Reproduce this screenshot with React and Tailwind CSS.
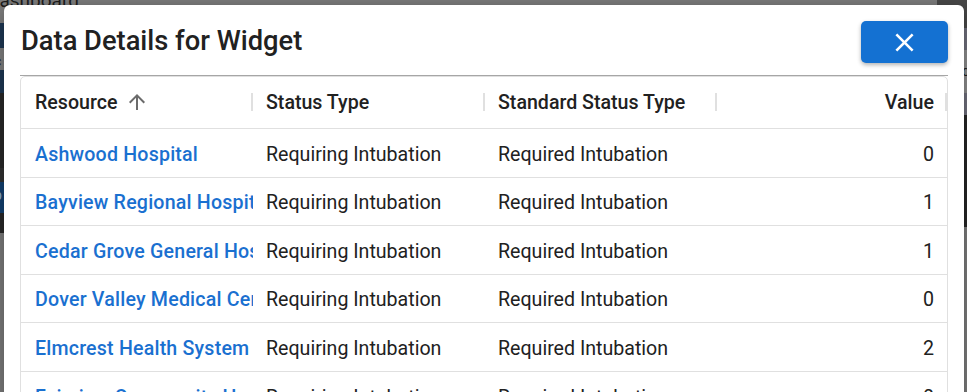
import React from 'react';

const rows = [
  { name: 'Ashwood Hospital', value: 0 },
  { name: 'Bayview Regional Hospital', value: 1 },
  { name: 'Cedar Grove General Hospital', value: 1 },
  { name: 'Dover Valley Medical Center', value: 0 },
  { name: 'Elmcrest Health System', value: 2 },
  { name: 'Fairview Community Hospital', value: 0 },
];

const ArrowUp = () => (
  <svg viewBox="0 0 24 24" className="h-[24px] w-[24px] fill-[#6b6b6b]">
    <path d="M4 12l1.41 1.41L11 7.83V20h2V7.83l5.58 5.59L20 12l-8-8-8 8z" />
  </svg>
);

const CloseIcon = () => (
  <svg viewBox="0 0 24 24" className="h-[31px] w-[31px] fill-white">
    <path d="M19 6.41L17.59 5 12 10.59 6.41 5 5 6.41 10.59 12 5 17.59 6.41 19 12 13.41 17.59 19 19 17.59 13.41 12z" />
  </svg>
);

const Sep = () => <div className="ml-auto h-[18px] w-[2px] shrink-0 bg-[#e0e0e0]" />;

const Backdrop = () => (
  <div className="flex h-full w-full justify-between">
    <div className="flex w-[80px] flex-col">
      <div className="h-[23px] overflow-hidden bg-[#7c7c7c]">
        <div className="-ml-[13px] -mt-[13px] text-[19px] text-[#1c1c1c]">Dashboard</div>
      </div>
      <div className="h-[25px] bg-[#1d3652]" />
      <div className="h-[22px] overflow-hidden bg-[#7c7c7c]">
        <div className="-ml-[6px] mt-[6px] text-[14px] leading-none text-[#1c1c1c]">c</div>
      </div>
      <div className="h-[23px] bg-[#1d3652]" />
      <div className="h-[75px] bg-[#272727]" />
      <div className="h-[14px] bg-[#303030]" />
      <div className="h-[31px] overflow-hidden bg-[#123f6e]">
        <div className="-ml-[6px] mt-[6px] text-[14px] leading-none text-[#8fb0d0]">p</div>
      </div>
      <div className="h-[20px] bg-[#272727]" />
      <div className="flex-1 bg-[#787878]" />
    </div>
    <div className="flex w-[30px] flex-col">
      <div className="h-[28px] bg-[#474747]" />
      <div className="h-[22px] bg-[#6d6d7a]" />
      <div className="h-[43px] overflow-hidden bg-[#8a8a8a] pl-[25px]">
        <div className="mt-[14px] text-[14px] leading-none text-[#1c1c1c]">c</div>
      </div>
      <div className="h-[22px] bg-[#6d6d7a]" />
      <div className="h-[112px] bg-[#262626]" />
      <div className="flex-1 bg-[#7a7a7a]" />
    </div>
  </div>
);

export default function App() {
  return (
    <div className="relative h-[392px] w-[967px] overflow-hidden bg-[#7a7a7a] font-['Roboto',sans-serif]">
      <Backdrop />
      <div className="absolute left-[4px] top-[5px] h-[420px] w-[960px] rounded-t-[6px] bg-white px-[16px] shadow-[0_4px_16px_rgba(0,0,0,0.3)]">
        <div className="flex items-center justify-between border-b border-[#a6a6a6] pb-[12px] pt-[16px]">
          <h2 className="pl-[1px] text-[27.3px] font-medium leading-none text-[#212121]">Data Details for Widget</h2>
          <button className="flex h-[42px] w-[87px] items-center justify-center rounded-[5px] bg-[#1471d2] shadow-[0_2px_4px_rgba(0,0,0,0.3)]">
            <CloseIcon />
          </button>
        </div>
        <div className="rounded-t-[5px] border border-[#e0e0e0] text-[19.6px] text-[#212121]">
          <div className="flex h-[52px] items-center border-b border-[#e0e0e0] font-medium">
            <div className="flex w-[232px] items-center pl-[14px]">
              <span>Resource</span>
              <span className="ml-[8px] flex items-center"><ArrowUp /></span>
              <Sep />
            </div>
            <div className="flex w-[232px] items-center pl-[13px]">
              <span>Status Type</span>
              <Sep />
            </div>
            <div className="flex w-[232px] items-center pl-[13px]">
              <span>Standard Status Type</span>
              <Sep />
            </div>
            <div className="flex flex-1 items-center justify-end">
              <span className="mr-[11px]">Value</span>
              <div className="h-[18px] w-[2px] bg-[#e0e0e0]" />
            </div>
          </div>
          {rows.map((row) => (
            <div key={row.name} className="flex h-[48.6px] items-center border-b border-[#e0e0e0] pt-[3px]">
              <div className="w-[232px] overflow-hidden whitespace-nowrap pl-[14px] font-medium tracking-[0.2px] text-[#1a70d0]">{row.name}</div>
              <div className="w-[232px] overflow-hidden whitespace-nowrap pl-[13px]">Requiring Intubation</div>
              <div className="w-[232px] overflow-hidden whitespace-nowrap pl-[13px]">Required Intubation</div>
              <div className="flex-1 pr-[13px] text-right">{row.value}</div>
            </div>
          ))}
        </div>
      </div>
    </div>
  );
}
